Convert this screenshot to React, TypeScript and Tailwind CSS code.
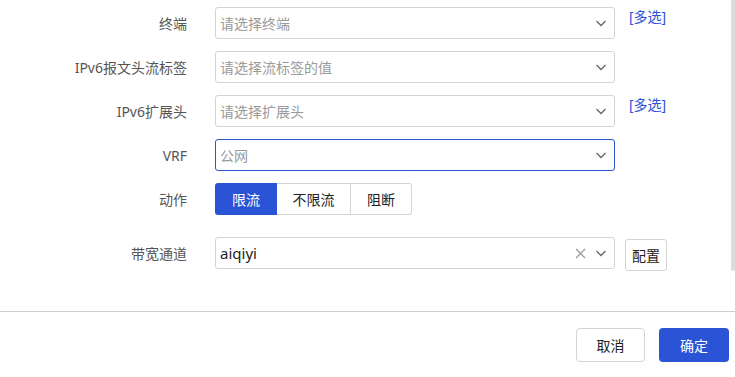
import React from "react";

const Chevron = () => (
  <svg width="12" height="12" viewBox="0 0 12 12" className="text-[#666]">
    <path d="M1.5 4 L6 8.5 L10.5 4" fill="none" stroke="currentColor" strokeWidth="1.3" />
  </svg>
);

const Close = () => (
  <svg width="11" height="11" viewBox="0 0 11 11" className="text-[#999]">
    <path d="M1 1 L10 10 M10 1 L1 10" fill="none" stroke="currentColor" strokeWidth="1.2" />
  </svg>
);

function Select({ placeholder, value, focused, clearable }: { placeholder?: string; value?: string; focused?: boolean; clearable?: boolean }) {
  return (
    <div
      className={`flex h-[32px] w-[400px] items-center rounded-[3px] border bg-white pl-[4px] pr-[5px] ${
        focused ? "border-[#2b53d6]" : "border-[#d4d4d4]"
      }`}
    >
      <span className={`flex-1 ${value ? "text-[15px] text-[#222]" : "text-[14px] text-[#9a9a9a]"}`}>{value ?? placeholder}</span>
      {clearable && (
        <span className="mr-[9px] flex items-center">
          <Close />
        </span>
      )}
      <span className="mr-[2px] flex items-center">
        <Chevron />
      </span>
    </div>
  );
}

function Row({ label, children, className = "" }: { label: string; children: React.ReactNode; className?: string }) {
  return (
    <div className={`flex items-start ${className}`}>
      <div className="flex h-[32px] w-[187px] shrink-0 items-center justify-end text-[14px] text-[#555]">{label}</div>
      <div className="ml-[28px] flex items-start">{children}</div>
    </div>
  );
}

export default function App() {
  return (
    <div
      className="relative h-[377px] w-[735px] overflow-hidden bg-white"
      style={{ fontFamily: '"Noto Sans", "Noto Sans CJK SC", sans-serif' }}
    >
      <div className="h-[311px] pt-[7px]">
        <div className="flex flex-col gap-[12px]">
          <Row label="终端">
            <Select placeholder="请选择终端" />
            <span className="ml-[14px] mt-[0px] text-[14px] leading-[20px] text-[#2b53d6]">[多选]</span>
          </Row>
          <Row label="IPv6报文头流标签">
            <Select placeholder="请选择流标签的值" />
          </Row>
          <Row label="IPv6扩展头">
            <Select placeholder="请选择扩展头" />
            <span className="ml-[14px] mt-[0px] text-[14px] leading-[20px] text-[#2b53d6]">[多选]</span>
          </Row>
          <Row label="VRF">
            <Select placeholder="公网" focused />
          </Row>
          <Row label="动作">
            <div className="flex h-[32px] text-[14px]">
              <div className="flex w-[62px] items-center justify-center rounded-l-[3px] bg-[#2b53d6] text-white">限流</div>
              <div className="flex w-[74px] items-center justify-center border-y border-r border-[#d4d4d4] text-[#222]">不限流</div>
              <div className="flex w-[61px] items-center justify-center rounded-r-[3px] border-y border-r border-[#d4d4d4] text-[#222]">阻断</div>
            </div>
          </Row>
          <Row label="带宽通道" className="mt-[10px]">
            <Select value="aiqiyi" clearable />
            <button className="ml-[10px] mt-[2px] flex h-[32px] w-[42px] items-center justify-center rounded-[3px] border border-[#d4d4d4] bg-white text-[14px] text-[#222]">
              配置
            </button>
          </Row>
        </div>
      </div>
      <div className="h-px w-full bg-[#cfcfcf]" />
      <div className="flex justify-end gap-[14px] pr-[6px] pt-[16px]">
        <button className="flex h-[34px] w-[69px] items-center justify-center rounded-[4px] border border-[#d4d4d4] bg-white text-[14px] text-[#222]">
          取消
        </button>
        <button className="flex h-[34px] w-[70px] items-center justify-center rounded-[4px] bg-[#2b53d6] text-[14px] text-white">
          确定
        </button>
      </div>
      <div className="absolute right-0 top-0 h-[271px] w-[4px] rounded-b-[2px] bg-[#dcdcdc]" />
    </div>
  );
}
